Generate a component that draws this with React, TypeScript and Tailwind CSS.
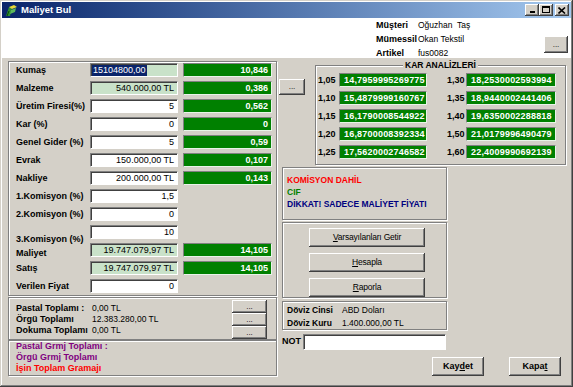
import React from "react";

const sunken =
  "border border-t-[#808080] border-l-[#808080] border-b-white border-r-white shadow-[inset_1px_1px_0_#404040]";
const greenBox =
  "bg-[#008000] border border-t-[#808080] border-l-[#808080] border-b-[#e8f4e8] border-r-[#e8f4e8] text-white font-bold";
const etched =
  "border border-[#808080] shadow-[inset_1px_1px_0_#ffffff,1px_1px_0_#ffffff]";
const raised =
  "bg-[#d4d0c8] shadow-[inset_-1px_-1px_0_#404040,inset_1px_1px_0_#ffffff,inset_-2px_-2px_0_#808080]";

type Row = {
  label: string;
  value: string;
  kind?: "sel" | "ro" | "in";
  green?: string;
  labelBottom?: boolean;
};

const rows: Row[] = [
  { label: "Kumaş", value: "15104800,00", kind: "sel", green: "10,846" },
  { label: "Malzeme", value: "540.000,00 TL", kind: "ro", green: "0,386" },
  { label: "Üretim Firesi(%)", value: "5", green: "0,562" },
  { label: "Kar (%)", value: "0", green: "0" },
  { label: "Genel Gider (%)", value: "5", green: "0,59" },
  { label: "Evrak", value: "150.000,00 TL", green: "0,107" },
  { label: "Nakliye", value: "200.000,00 TL", green: "0,143" },
  { label: "1.Komisyon (%)", value: "1,5" },
  { label: "2.Komisyon (%)", value: "0" },
  { label: "3.Komisyon (%)", value: "10", labelBottom: true },
  { label: "Maliyet", value: "19.747.079,97 TL", kind: "ro", green: "14,105", labelBottom: true },
  { label: "Satış", value: "19.747.079,97 TL", kind: "ro", green: "14,105" },
  { label: "Verilen Fiyat", value: "0" },
];

const kar: [string, string][] = [
  ["1,05", "14,7959995269775"],
  ["1,30", "18,2530002593994"],
  ["1,10", "15,4879999160767"],
  ["1,35", "18,9440002441406"],
  ["1,15", "16,1790008544922"],
  ["1,40", "19,6350002288818"],
  ["1,20", "16,8700008392334"],
  ["1,50", "21,0179996490479"],
  ["1,25", "17,5620002746582"],
  ["1,60", "22,4009990692139"],
];

function TitleBar() {
  return (
    <div className="h-[16px] flex items-center bg-linear-to-r from-[#0a246a] to-[#a6caf0] pl-[3px] pr-[2px]">
      <svg width="13" height="13" viewBox="0 0 13 13">
        <path d="M1 12 L4 3 L7 4 L5 12 Z" fill="#2f8f2f" />
        <path d="M4 3 L9 1 L12 3 L7 5 Z" fill="#e8d838" />
        <path d="M6 6 L11 4 L10 8 L5 10 Z" fill="#5cb85c" />
        <path d="M2 12 L4 7" stroke="#0a4a0a" strokeWidth="1" />
      </svg>
      <span className="ml-[3px] text-white font-bold text-[9.5px] leading-none">Maliyet Bul</span>
      <div className="ml-auto flex items-center">
        <div className={`${raised} w-[14px] h-[12px] flex items-end justify-center pb-[3px]`}>
          <div className="w-[5px] h-[2px] bg-black" />
        </div>
        <div className={`${raised} w-[14px] h-[12px] flex items-center justify-center`}>
          <div className="w-[8px] h-[7px] border border-black border-t-2 -mt-[1px]" />
        </div>
        <div className={`${raised} ml-[2px] w-[14px] h-[12px] flex items-center justify-center`}>
          <svg width="8" height="7" viewBox="0 0 8 7">
            <path d="M0.5 0.5 L7 6.5 M7 0.5 L0.5 6.5" stroke="black" strokeWidth="1.6" />
          </svg>
        </div>
      </div>
    </div>
  );
}

function Header() {
  return (
    <div className="h-[40px] bg-white flex">
      <div className="ml-[374px] grid grid-cols-[42px_auto] auto-rows-[14px] leading-[14px] whitespace-pre">
        <span className="font-bold text-[9px]">Müşteri</span>
        <span className="text-[8.5px]">Oğuzhan  Taş</span>
        <span className="font-bold text-[9px]">Mümessil</span>
        <span className="text-[8.5px]">Okan Tekstil</span>
        <span className="font-bold text-[9px]">Artikel</span>
        <span className="text-[8.5px]">fus0082</span>
      </div>
      <div
        className={`${raised} ml-auto mr-[3px] mt-[18px] w-[24px] h-[17px] flex items-center justify-center text-[8px] leading-none`}
      >
        ...
      </div>
    </div>
  );
}

function LeftRow({ r }: { r: Row }) {
  const bg = r.kind === "sel" || r.kind === "ro" ? "bg-[#c9e2c9]" : "bg-white";
  return (
    <div className="flex h-[14px]">
      <div
        className={`w-[74px] font-bold text-[9px] whitespace-nowrap leading-[14px] ${
          r.labelBottom ? (r.label === "Maliyet" ? "mt-[3px]" : "mt-[7px]") : ""
        }`}
      >
        {r.label}
      </div>
      <div
        className={`${sunken} ${bg} w-[88px] h-[14px] text-[9px] leading-[12px] flex ${
          r.kind === "sel" ? "justify-start pl-[1px]" : "justify-end pr-[3px]"
        }`}
      >
        {r.kind === "sel" ? (
          <span className="bg-[#0a246a] text-white px-[1px] leading-[11px] h-[11px] mt-[1px]">{r.value}</span>
        ) : (
          <span>{r.value}</span>
        )}
      </div>
      {r.green && (
        <div
          className={`${greenBox} ml-[5px] w-[89px] h-[14px] text-[9px] leading-[12px] text-right pr-[3px]`}
        >
          {r.green}
        </div>
      )}
    </div>
  );
}

function LeftColumn() {
  return (
    <div className="ml-[6px] w-[269px] flex flex-col">
      <div className={`${etched} mt-[3px] h-[235px] pt-[1px] pl-[7px] flex flex-col gap-[4px]`}>
        {rows.map((r) => (
          <LeftRow key={r.label} r={r} />
        ))}
      </div>
      <div className={`${etched} mt-[1px] h-[43px] flex justify-between pl-[7px] pr-[9px]`}>
        <div className="pt-[5px] grid grid-cols-[76px_auto] auto-rows-[11px] leading-[11px]">
          <span className="font-bold text-[9px]">Pastal Toplamı :</span>
          <span className="text-[8.5px]">0,00 TL</span>
          <span className="font-bold text-[9px]">Örgü Toplamı</span>
          <span className="text-[8.5px]">12.383.280,00 TL</span>
          <span className="font-bold text-[9px]">Dokuma Toplamı</span>
          <span className="text-[8.5px]">0,00 TL</span>
        </div>
        <div className="pt-[2px] flex flex-col">
          {[0, 1, 2].map((i) => (
            <div
              key={i}
              className={`${raised} w-[35px] h-[13px] flex items-center justify-center text-[8px] leading-none`}
            >
              ...
            </div>
          ))}
        </div>
      </div>
      <div className={`${etched} h-[36px] pl-[7px] flex flex-col leading-[11px] font-bold text-[9px]`}>
        <span className="text-[#800080]">Pastal Grmj Toplamı :</span>
        <span className="text-[#800080]">Örgü Grmj Toplamı</span>
        <span className="text-[#ff0000]">İşin Toplam Gramajı</span>
      </div>
    </div>
  );
}

function KarBox() {
  return (
    <div className={`${etched} ml-[10px] mt-[7px] w-[251px] h-[100px] flex flex-col`}>
      <div className="-mt-[7px] h-[12px] flex justify-center">
        <span className="bg-[#d4d0c8] px-[2px] font-bold text-[8.5px] leading-[12px]">KAR ANALİZLERİ</span>
      </div>
      <div className="pt-[2px] grid grid-cols-[23px_88px_18px_21px_90px] auto-rows-[14px] gap-y-[4px]">
        {kar.map(([k, v], i) => (
          <React.Fragment key={k}>
            {i % 2 === 1 && <span />}
            <span className="font-bold text-[9px] leading-[14px] pl-[2px]">{k}</span>
            <span className={`${greenBox} text-[9px] leading-[12px] pl-[4px] tracking-[0.2px]`}>{v}</span>
          </React.Fragment>
        ))}
      </div>
    </div>
  );
}

function Btn({ children, className = "" }: { children: React.ReactNode; className?: string }) {
  return (
    <div className={`${raised} flex items-center justify-center leading-none ${className}`}>{children}</div>
  );
}

function RightArea() {
  return (
    <div className="w-[292px] flex flex-col">
      <div className="flex items-start">
        <Btn className="ml-[2px] mt-[21px] w-[26px] h-[16px] text-[8px]">...</Btn>
        <KarBox />
      </div>
      <div className="ml-[5px] mt-[2px] w-[165px] flex flex-col">
        <div className={`${etched} h-[53px] pt-[6px] pl-[4px] flex flex-col leading-[12px] font-bold text-[8.5px]`}>
          <span className="text-[#ff0000]">KOMİSYON DAHİL</span>
          <span className="text-[#008000]">CIF</span>
          <span className="text-[#000080] whitespace-nowrap">DİKKAT! SADECE MALİYET FİYATI</span>
        </div>
        <div className={`${etched} mt-[2px] h-[76px] pt-[5px] pl-[26px] flex flex-col gap-[6px]`}>
          <Btn className="w-[116px] h-[19px] text-[8.5px] tracking-[-0.2px]">
            <span>
              <span className="underline">V</span>arsayılanları Getir
            </span>
          </Btn>
          <Btn className="w-[116px] h-[19px] text-[8.5px] tracking-[-0.2px]">
            <span>
              <span className="underline">H</span>esapla
            </span>
          </Btn>
          <Btn className="w-[116px] h-[19px] text-[8.5px] tracking-[-0.2px]">
            <span>
              <span className="underline">R</span>aporla
            </span>
          </Btn>
        </div>
        <div className={`${etched} mt-[3px] h-[29px] pt-[2px] pl-[4px] grid grid-cols-[55px_auto] auto-rows-[13px] leading-[13px]`}>
          <span className="font-bold text-[8.5px]">Döviz Cinsi</span>
          <span className="text-[8.5px]">ABD Doları</span>
          <span className="font-bold text-[8.5px]">Döviz Kuru</span>
          <span className="text-[8.5px]">1.400.000,00 TL</span>
        </div>
        <div className="mt-[4px] h-[16px] flex items-center">
          <span className="w-[21px] font-bold text-[9px]">NOT</span>
          <div className={`${sunken} bg-white w-[143px] h-[16px]`} />
        </div>
      </div>
      <div className="mt-[7px] ml-[155px] flex gap-[25px]">
        <Btn className="w-[52px] h-[19px] font-bold text-[9px]">
          <span>
            Kay<span className="underline">d</span>et
          </span>
        </Btn>
        <Btn className="w-[52px] h-[19px] font-bold text-[9px]">
          <span>
            Kapa<span className="underline">t</span>
          </span>
        </Btn>
      </div>
    </div>
  );
}

export default function App() {
  return (
    <div className="w-[573px] h-[387px] overflow-hidden bg-[#d4d0c8] p-[2px] font-['Liberation_Sans',Arial,sans-serif] text-black shadow-[inset_-1px_-1px_0_#404040,inset_1px_1px_0_#d4d0c8,inset_-2px_-2px_0_#808080,inset_2px_2px_0_#ffffff] flex flex-col">
      <TitleBar />
      <Header />
      <div className="flex flex-1">
        <LeftColumn />
        <RightArea />
      </div>
    </div>
  );
}
